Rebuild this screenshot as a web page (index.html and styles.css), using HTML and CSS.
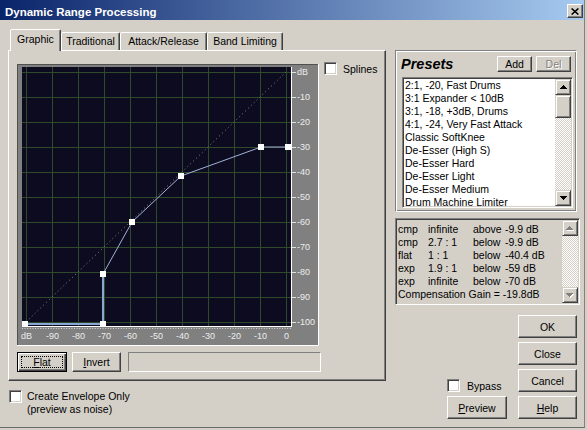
FILE: index.html
```html
<!DOCTYPE html>
<html>
<head>
<meta charset="utf-8">
<title>Dynamic Range Processing</title>
<link rel="stylesheet" href="styles.css">
</head>
<body>
<div class="window">
  <div class="titlebar">
    <span class="title">Dynamic Range Processing</span>
    <span class="close"><svg width="8" height="7" viewBox="0 0 8 7"><path d="M0.6 0.5L7.4 6.5M7.4 0.5L0.6 6.5" stroke="#000" stroke-width="1.6" fill="none"/></svg></span>
  </div>
  <div class="main">
    <div class="left">
      <div class="tabs">
        <div class="tab active w-graphic">Graphic</div>
        <div class="tab w-trad">Traditional</div>
        <div class="tab w-attack">Attack/Release</div>
        <div class="tab w-band">Band Limiting</div>
      </div>
      <div class="panel">
        <div class="graph-row">
          <svg class="graph" width="302" height="282" viewBox="17 64 302 282">
            <rect x="17" y="64" width="302" height="282" fill="#808080"/>
            <path d="M17.5 345V64.5H318" stroke="#505050" fill="none"/>
            <path d="M17 345.5H318.5V64" stroke="#ffffff" fill="none"/>
            <rect x="22" y="67" width="269" height="259" fill="#0c0b1f"/>
            <path class="grid" d="M26.5 67V326M52.5 67V326M78.5 67V326M104.5 67V326M130.5 67V326M156.5 67V326M182.5 67V326M208.5 67V326M234.5 67V326M260.5 67V326M286.5 67V326"/>
            <path class="grid" d="M22 72.5H291M22 97.5H291M22 122.5H291M22 147.5H291M22 172.5H291M22 197.5H291M22 222.5H291M22 247.5H291M22 272.5H291M22 297.5H291M22 322.5H291"/>
            <path d="M291.5 67V327M22 326.5H292" stroke="#ffffff" fill="none"/>
            <path d="M22 328.5H292" stroke="#d8d8d8" stroke-dasharray="1 1.6" fill="none"/>
            <path d="M292 72.5H296M292 97.5H296M292 122.5H296M292 147.5H296M292 172.5H296M292 197.5H296M292 222.5H296M292 247.5H296M292 272.5H296M292 297.5H296M292 322.5H296" stroke="#e0e0e0" fill="none"/>
            <g class="axis">
              <text x="297" y="75">dB</text>
              <text x="297" y="100">-10</text>
              <text x="297" y="125">-20</text>
              <text x="297" y="150">-30</text>
              <text x="297" y="175">-40</text>
              <text x="297" y="200">-50</text>
              <text x="297" y="225">-60</text>
              <text x="297" y="250">-70</text>
              <text x="297" y="275">-80</text>
              <text x="297" y="300">-90</text>
              <text x="297" y="325">-100</text>
            </g>
            <g class="axis mid">
              <text x="26.5" y="339">dB</text>
              <text x="52.5" y="339">-90</text>
              <text x="78.5" y="339">-80</text>
              <text x="104.5" y="339">-70</text>
              <text x="130.5" y="339">-60</text>
              <text x="156.5" y="339">-50</text>
              <text x="182.5" y="339">-40</text>
              <text x="208.5" y="339">-30</text>
              <text x="234.5" y="339">-20</text>
              <text x="260.5" y="339">-10</text>
              <text x="286.5" y="339">0</text>
            </g>
            <path d="M26 322L286 72" stroke="#8c8c8c" stroke-dasharray="1 3" fill="none"/>
            <polyline points="25,324 103,324 103,274" stroke="#8aa6d2" stroke-width="2" fill="none"/>
            <polyline points="103,274 132,222 181,176 261,147 288,147" stroke="#a4b2da" stroke-width="1" fill="none"/>
            <g fill="#ffffff">
              <rect x="22" y="321" width="6" height="5"/>
              <rect x="100" y="321" width="6" height="5"/>
              <rect x="100" y="271" width="6" height="6"/>
              <rect x="129" y="219" width="6" height="6"/>
              <rect x="178" y="173" width="6" height="6"/>
              <rect x="258" y="144" width="6" height="6"/>
              <rect x="285" y="144" width="6" height="6"/>
            </g>
          </svg>
          <div class="check splines"><span class="box"></span><span>Splines</span></div>
        </div>
        <div class="btn-row">
          <button class="btn default w-flat"><span class="focus"><u>F</u>lat</span></button>
          <button class="btn w-invert"><u>I</u>nvert</button>
          <div class="field"></div>
        </div>
      </div>
      <div class="check envelope"><span class="box"></span><div>Create Envelope Only<br>(preview as noise)</div></div>
    </div>
    <div class="right">
      <div class="presets">
        <div class="presets-head">
          <span class="presets-title">Presets</span>
          <button class="btn small">Add</button>
          <button class="btn small disabled">Del</button>
        </div>
        <div class="listbox">
          <div class="items">
            <div>2:1, -20, Fast Drums</div>
            <div>3:1 Expander &lt; 10dB</div>
            <div>3:1, -18, +3dB, Drums</div>
            <div>4:1, -24, Very Fast Attack</div>
            <div>Classic SoftKnee</div>
            <div>De-Esser (High S)</div>
            <div>De-Esser Hard</div>
            <div>De-Esser Light</div>
            <div>De-Esser Medium</div>
            <div>Drum Machine Limiter</div>
          </div>
          <div class="vscroll">
            <div class="sbtn"><svg width="7" height="4" viewBox="0 0 7 4"><path d="M3 0h1v1h1v1h1v1h1v1H0V3h1V2h1V1h1z"/></svg></div>
            <div class="sbtn thumb"></div>
            <div class="track"></div>
            <div class="sbtn"><svg width="7" height="4" viewBox="0 0 7 4"><path d="M0 0h7v1H6v1H5v1H4v1H3V3H2V2H1V1H0z"/></svg></div>
          </div>
        </div>
      </div>
      <div class="info">
        <div class="info-text">
          <div class="row"><span>cmp</span><span>infinite</span><span>above</span><span>-9.9 dB</span></div>
          <div class="row"><span>cmp</span><span>2.7 : 1</span><span>below</span><span>-9.9 dB</span></div>
          <div class="row"><span>flat</span><span>1 : 1</span><span>below</span><span>-40.4 dB</span></div>
          <div class="row"><span>exp</span><span>1.9 : 1</span><span>below</span><span>-59 dB</span></div>
          <div class="row"><span>exp</span><span>infinite</span><span>below</span><span>-70 dB</span></div>
          <div>Compensation Gain = -19.8dB</div>
        </div>
        <div class="vscroll">
          <div class="sbtn"><svg width="8" height="5" viewBox="0 0 8 5"><path fill="#fff" d="M4 1h1v1h1v1h1v1h1v1H1V4h1V3h1V2h1z"/><path fill="#808080" d="M3 0h1v1h1v1h1v1h1v1H0V3h1V2h1V1h1z"/></svg></div>
          <div class="track"></div>
          <div class="sbtn"><svg width="8" height="5" viewBox="0 0 8 5"><path fill="#fff" d="M1 1h7v1H7v1H6v1H5v1H4V4H3V3H2V2H1z"/><path fill="#808080" d="M0 0h7v1H6v1H5v1H4v1H3V3H2V2H1V1H0z"/></svg></div>
        </div>
      </div>
      <div class="actions">
        <div class="preview-col">
          <div class="check bypass"><span class="box"></span><span>Bypass</span></div>
          <button class="btn w-preview"><u>P</u>review</button>
        </div>
        <div class="dialog-btns">
          <button class="btn">OK</button>
          <button class="btn">Close</button>
          <button class="btn">Cancel</button>
          <button class="btn"><u>H</u>elp</button>
        </div>
      </div>
    </div>
  </div>
</div>
</body>
</html>
```
FILE: styles.css
```css
* { box-sizing: border-box; }
body {
  margin: 0;
  background: #d4d0c8;
  font-family: "Liberation Sans", Arial, sans-serif;
  font-size: 10.5px;
  color: #000;
}
.window {
  width: 585px;
  height: 428px;
  background: #d4d0c8;
  border-right: 1px solid #808080;
  border-bottom: 1px solid #6a6a6a;
  overflow: hidden;
}
.titlebar {
  height: 20px;
  display: flex;
  justify-content: space-between;
  align-items: flex-start;
  background: linear-gradient(to right, #0a246a, #a6caf0);
}
.title {
  color: #fff;
  font-weight: bold;
  font-size: 11.5px;
  line-height: 13px;
  margin: 6px 0 0 5px;
  white-space: nowrap;
}
.close {
  width: 16px;
  height: 14px;
  margin: 4px 1px 0 0;
  background: #d4d0c8;
  border: 1px solid;
  border-color: #fff #404040 #404040 #fff;
  box-shadow: inset -1px -1px #808080;
  display: flex;
  align-items: center;
  justify-content: center;
}
.close svg { display: block; }
.main { display: flex; padding-top: 9px; }
.left { margin-left: 8px; width: 378px; flex: none; }
.tabs {
  display: flex;
  align-items: flex-end;
  height: 21px;
  padding-left: 2px;
}
.tab {
  height: 18px;
  line-height: 16px;
  text-align: center;
  background: #d4d0c8;
  border: 1px solid;
  border-bottom: 0;
  border-color: #fff #404040 transparent #fff;
  border-radius: 2px 2px 0 0;
  box-shadow: inset -1px 0 #808080;
  white-space: nowrap;
}
.tab.active {
  height: 22px;
  line-height: 18px;
  margin-bottom: -1px;
  position: relative;
  z-index: 1;
}
.w-graphic { width: 51px; }
.w-trad { width: 59px; }
.w-attack { width: 87px; }
.w-band { width: 76px; }
.panel {
  height: 331px;
  border: 1px solid;
  border-color: #fff #404040 #404040 #fff;
  box-shadow: inset -1px -1px #808080;
  padding: 13px 0 0 8px;
}
.graph-row { display: flex; align-items: flex-start; }
.graph { display: block; flex: none; }
.grid { stroke: #2e4a2b; fill: none; }
.axis { font-family: "Liberation Sans", Arial, sans-serif; font-size: 9px; fill: #ececec; }
.axis.mid { text-anchor: middle; }
.check { display: flex; align-items: center; gap: 6px; white-space: nowrap; }
.box {
  width: 13px;
  height: 13px;
  flex: none;
  background: #fff;
  border: 1px solid;
  border-color: #808080 #fff #fff #808080;
  box-shadow: inset 1px 1px #404040, inset -1px -1px #d4d0c8;
}
.splines { margin: -2px 0 0 5px; height: 13px; }
.btn-row { display: flex; margin-top: 6px; height: 20px; }
.btn {
  font: inherit;
  color: #000;
  background: #d4d0c8;
  border: 1px solid;
  border-color: #fff #404040 #404040 #fff;
  box-shadow: inset -1px -1px #808080;
  padding: 0;
  margin: 0;
  display: flex;
  align-items: center;
  justify-content: center;
}
.btn.default {
  border-color: #000;
  box-shadow: inset 1px 1px #fff, inset -1px -1px #404040, inset -2px -2px #808080;
  padding: 3px;
}
.focus {
  flex: 1;
  align-self: stretch;
  border: 1px dotted #000;
  display: flex;
  align-items: center;
  justify-content: center;
}
.w-flat { width: 50px; }
.w-invert { width: 49px; margin-left: 5px; }
.field {
  width: 193px;
  margin-left: 7px;
  border: 1px solid;
  border-color: #808080 #fff #fff #808080;
}
.envelope {
  margin: 9px 0 0 1px;
  align-items: flex-start;
  gap: 5px;
  line-height: 13px;
}
.right { margin: 21px 0 0 9px; width: 185px; flex: none; }
.presets {
  width: 182px;
  height: 162px;
  border: 1px solid;
  border-color: #808080 #fff #fff #808080;
  box-shadow: inset 1px 1px #fff, inset -1px -1px #808080;
  padding: 5px 3px 3px 5px;
}
.presets-head {
  display: flex;
  align-items: center;
  height: 16px;
  margin-right: 2px;
  gap: 4px;
}
.presets-title {
  font-weight: bold;
  font-style: italic;
  font-size: 14.5px;
  margin-right: auto;
}
.btn.small { width: 35px; height: 16px; }
.btn.disabled { color: #808080; text-shadow: 1px 1px #fff; }
.listbox {
  margin: 5px 0 0 1px;
  width: 171px;
  height: 131px;
  display: flex;
  background: #fff;
  border: 1px solid;
  border-color: #808080 #fff #fff #808080;
  padding: 1px;
  box-shadow: inset 1px 1px #404040, inset -1px -1px #d4d0c8;
}
.items {
  flex: 1;
  padding-left: 1px;
  line-height: 13px;
  overflow: hidden;
  white-space: nowrap;
}
.vscroll { width: 16px; flex: none; display: flex; flex-direction: column; }
.sbtn {
  height: 16px;
  flex: none;
  background: #d4d0c8;
  border: 1px solid;
  border-color: #d4d0c8 #404040 #404040 #d4d0c8;
  box-shadow: inset 1px 1px #fff, inset -1px -1px #808080;
  display: flex;
  align-items: center;
  justify-content: center;
}
.sbtn svg { display: block; }
.sbtn.thumb { height: 23px; }
.track {
  flex: 1;
  background: repeating-conic-gradient(#fff 0 25%, #d4d0c8 0 50%) 0 0 / 2px 2px;
}
.info {
  margin-top: 6px;
  width: 185px;
  height: 87px;
  display: flex;
  border: 1px solid;
  border-color: #808080 #fff #fff #808080;
  padding: 1px;
  box-shadow: inset 1px 1px #404040, inset -1px -1px #d4d0c8;
}
.info-text {
  flex: 1;
  padding: 3px 0 0 1px;
  line-height: 13px;
  white-space: nowrap;
  overflow: hidden;
}
.row { display: grid; grid-template-columns: 30px 45px 32px auto; }
.actions {
  margin: 10px 3px 0 0;
  display: flex;
  justify-content: flex-end;
  align-items: flex-end;
}
.preview-col {
  width: 60px;
  margin-right: 11px;
  display: flex;
  flex-direction: column;
}
.bypass { height: 13px; gap: 7px; margin-bottom: 4px; }
.w-preview { width: 60px; height: 23px; }
.dialog-btns { display: flex; flex-direction: column; gap: 4px; width: 59px; }
.dialog-btns .btn { height: 23px; }
```
